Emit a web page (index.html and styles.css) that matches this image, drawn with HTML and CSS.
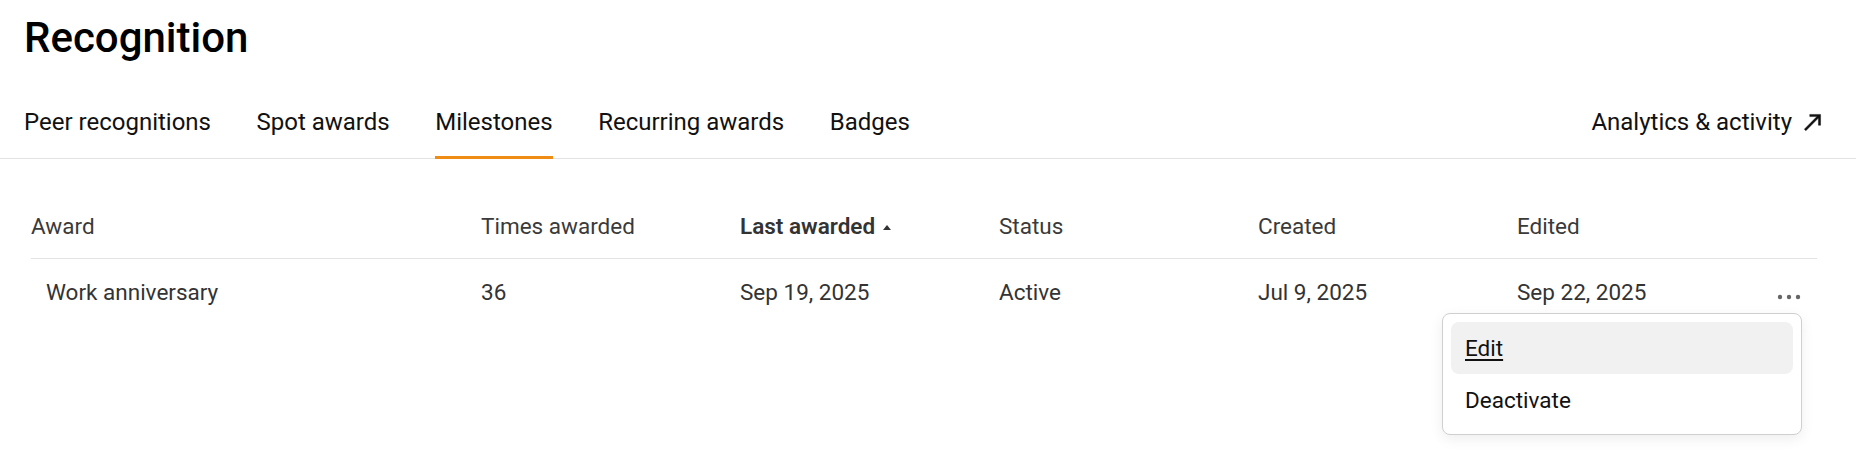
FILE: index.html
```html
<!DOCTYPE html>
<html lang="en">
<head>
<meta charset="utf-8">
<title>Recognition</title>
<link rel="stylesheet" href="styles.css">
</head>
<body>
<header class="page-header">
  <h1 class="page-title">Recognition</h1>
</header>
<nav class="tabbar">
  <div class="tabs">
    <a class="tab">Peer recognitions</a>
    <a class="tab">Spot awards</a>
    <a class="tab tab-active">Milestones</a>
    <a class="tab">Recurring awards</a>
    <a class="tab">Badges</a>
  </div>
  <a class="tab tab-link">Analytics &amp; activity
    <svg class="ext-icon" viewBox="0 0 24 24" width="26" height="26"><path d="M9 5v2h6.59L4 18.59 5.41 20 17 8.41V15h2V5z" fill="#111" stroke="#111" stroke-width="0.4"/></svg>
  </a>
</nav>
<main class="content">
  <table class="awards">
    <colgroup>
      <col class="col-award">
      <col class="col-std">
      <col class="col-std">
      <col class="col-std">
      <col class="col-std">
      <col class="col-std">
      <col class="col-actions">
    </colgroup>
    <thead>
      <tr>
        <th>Award</th>
        <th>Times awarded</th>
        <th class="sorted">Last awarded<svg class="sort-icon" viewBox="0 0 8 6" width="8" height="6"><path d="M0 6L4 1L8 6Z" fill="#333"/></svg></th>
        <th>Status</th>
        <th>Created</th>
        <th>Edited</th>
        <th></th>
      </tr>
    </thead>
    <tbody>
      <tr>
        <td class="name">Work anniversary</td>
        <td>36</td>
        <td>Sep 19, 2025</td>
        <td>Active</td>
        <td>Jul 9, 2025</td>
        <td>Sep 22, 2025</td>
        <td class="actions">
          <svg class="dots" viewBox="0 0 24 6" width="24" height="6"><circle cx="3" cy="3" r="2.2" fill="#666"/><circle cx="12" cy="3" r="2.2" fill="#666"/><circle cx="21" cy="3" r="2.2" fill="#666"/></svg>
          <div class="menu">
            <a class="menu-item menu-item-hover">Edit</a>
            <a class="menu-item">Deactivate</a>
          </div>
        </td>
      </tr>
    </tbody>
  </table>
</main>
</body>
</html>
```
FILE: styles.css
```css
html, body {
  margin: 0;
  padding: 0;
  background: #ffffff;
  font-family: Roboto, "Noto Sans", Arial, sans-serif;
  color: #111;
}

body {
  min-height: 470px;
}

.page-header {
  padding: 14px 24px 0;
}

.page-title {
  margin: 0;
  font-size: 42px;
  line-height: 48px;
  font-weight: 500;
  color: #000;
}

.tabbar {
  margin-top: 44px;
  display: flex;
  align-items: flex-end;
  justify-content: space-between;
  padding: 0 30px 0 24px;
  border-bottom: 1px solid #e3e3e3;
}

.tabs {
  display: flex;
  gap: 45.5px;
}

.tab {
  display: flex;
  align-items: center;
  font-size: 24px;
  line-height: 32px;
  color: #111;
  padding-bottom: 18px;
  border-bottom: 3px solid transparent;
  margin-bottom: -1px;
  text-decoration: none;
}

.tab-active {
  border-bottom-color: #ef8c14;
}

.tab-link {
  gap: 8px;
}

.ext-icon {
  display: block;
}

.content {
  padding: 34px 39px 160px 31px;
}

.awards {
  width: 100%;
  table-layout: fixed;
  border-collapse: collapse;
  font-size: 22.5px;
  line-height: 26px;
  color: #333;
}

.col-award { width: 450px; }
.col-std { width: 259px; }
.col-actions { width: 41px; }

.awards th {
  text-align: left;
  font-weight: 400;
  color: #3a3a3a;
  padding: 20px 0 19px;
  border-bottom: 1px solid #e3e3e3;
  white-space: nowrap;
}

.awards th.sorted {
  font-weight: 600;
  color: #333;
}

.sort-icon {
  margin-left: 8px;
  vertical-align: 4px;
}

.awards td {
  padding: 20px 0;
  white-space: nowrap;
  color: #333;
}

.awards td.name {
  padding-left: 15px;
}

.actions {
  position: relative;
}

.dots {
  display: block;
  margin: 10px 0 0 1px;
}

.menu {
  position: absolute;
  top: 54px;
  right: 15px;
  width: 360px;
  box-sizing: border-box;
  padding: 8px;
  background: #fff;
  border: 1px solid #cfcfcf;
  border-radius: 8px;
  box-shadow: 0 4px 14px rgba(0, 0, 0, 0.07);
  z-index: 2;
}

.menu-item {
  display: block;
  height: 52px;
  line-height: 52px;
  padding: 0 14px;
  font-size: 22.5px;
  color: #111;
  border-radius: 8px;
  text-decoration: none;
}

.menu-item-hover {
  background: #f1f1f1;
  text-decoration: underline;
  text-underline-offset: 3px;
}
```
